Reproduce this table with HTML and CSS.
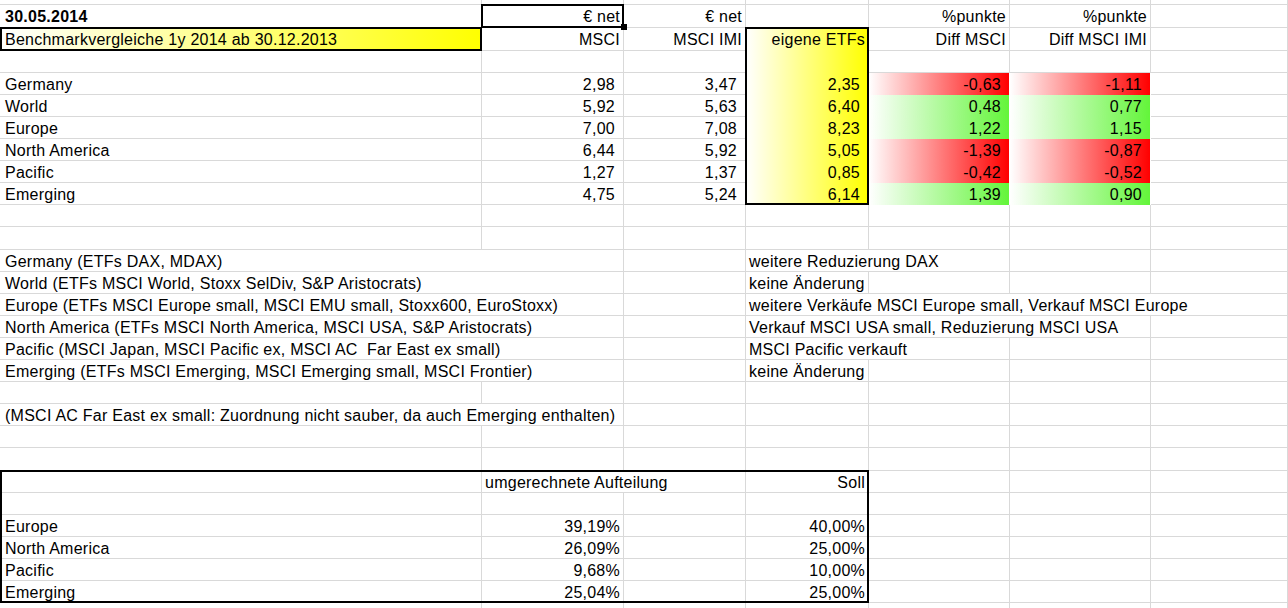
FILE: index.html
```html
<!DOCTYPE html>
<html lang="de">
<head>
<meta charset="utf-8">
<title>Benchmarkvergleiche</title>
<link rel="stylesheet" href="styles.css">
</head>
<body>
<div class="sheet">
  <!-- row 0 (partially scrolled) -->
  <div class="c"></div><div class="c"></div><div class="c"></div><div class="c"></div><div class="c"></div><div class="c"></div><div class="c"></div>

  <!-- row 1 -->
  <div class="c a b">30.05.2014</div>
  <div class="c r kt kl kr kb sel">€ net</div>
  <div class="c r">€ net</div>
  <div class="c"></div>
  <div class="c r">%punkte</div>
  <div class="c r">%punkte</div>
  <div class="c"></div>

  <!-- row 2 -->
  <div class="c a yel kt kl kr kb">Benchmarkvergleiche 1y 2014 ab 30.12.2013</div>
  <div class="c r">MSCI</div>
  <div class="c r">MSCI IMI</div>
  <div class="c r yel kt kl kr">eigene ETFs</div>
  <div class="c r">Diff MSCI</div>
  <div class="c r">Diff MSCI IMI</div>
  <div class="c"></div>

  <!-- row 3 -->
  <div class="c a"></div><div class="c"></div><div class="c"></div>
  <div class="c yel kl kr"></div>
  <div class="c"></div><div class="c"></div><div class="c"></div>

  <!-- row 4 -->
  <div class="c a">Germany</div>
  <div class="c r n">2,98</div>
  <div class="c r n">3,47</div>
  <div class="c r n yel kl kr">2,35</div>
  <div class="c r n red">-0,63</div>
  <div class="c r n red">-1,11</div>
  <div class="c"></div>

  <!-- row 5 -->
  <div class="c a">World</div>
  <div class="c r n">5,92</div>
  <div class="c r n">5,63</div>
  <div class="c r n yel kl kr">6,40</div>
  <div class="c r n grn">0,48</div>
  <div class="c r n grn">0,77</div>
  <div class="c"></div>

  <!-- row 6 -->
  <div class="c a">Europe</div>
  <div class="c r n">7,00</div>
  <div class="c r n">7,08</div>
  <div class="c r n yel kl kr">8,23</div>
  <div class="c r n grn">1,22</div>
  <div class="c r n grn">1,15</div>
  <div class="c"></div>

  <!-- row 7 -->
  <div class="c a">North America</div>
  <div class="c r n">6,44</div>
  <div class="c r n">5,92</div>
  <div class="c r n yel kl kr">5,05</div>
  <div class="c r n red">-1,39</div>
  <div class="c r n red">-0,87</div>
  <div class="c"></div>

  <!-- row 8 -->
  <div class="c a">Pacific</div>
  <div class="c r n">1,27</div>
  <div class="c r n">1,37</div>
  <div class="c r n yel kl kr">0,85</div>
  <div class="c r n red">-0,42</div>
  <div class="c r n red">-0,52</div>
  <div class="c"></div>

  <!-- row 9 -->
  <div class="c a">Emerging</div>
  <div class="c r n">4,75</div>
  <div class="c r n">5,24</div>
  <div class="c r n yel kl kr kb">6,14</div>
  <div class="c r n grn">1,39</div>
  <div class="c r n grn">0,90</div>
  <div class="c"></div>

  <!-- row 10 -->
  <div class="c a"></div><div class="c"></div><div class="c"></div><div class="c"></div><div class="c"></div><div class="c"></div><div class="c"></div>
  <!-- row 11 -->
  <div class="c a"></div><div class="c"></div><div class="c"></div><div class="c"></div><div class="c"></div><div class="c"></div><div class="c"></div>

  <!-- row 12 -->
  <div class="c a s2">Germany (ETFs DAX, MDAX)</div>
  <div class="c"></div>
  <div class="c s2">weitere Reduzierung DAX</div>
  <div class="c"></div>
  <div class="c"></div>

  <!-- row 13 -->
  <div class="c a s2">World (ETFs MSCI World, Stoxx SelDiv, S&amp;P Aristocrats)</div>
  <div class="c"></div>
  <div class="c">keine Änderung</div>
  <div class="c"></div>
  <div class="c"></div>
  <div class="c"></div>

  <!-- row 14 -->
  <div class="c a s2">Europe (ETFs MSCI Europe small, MSCI EMU small, Stoxx600, EuroStoxx)</div>
  <div class="c"></div>
  <div class="c s4">weitere Verkäufe MSCI Europe small, Verkauf MSCI Europe</div>

  <!-- row 15 -->
  <div class="c a s2">North America (ETFs MSCI North America, MSCI USA, S&amp;P Aristocrats)</div>
  <div class="c"></div>
  <div class="c s3">Verkauf MSCI USA small, Reduzierung MSCI USA</div>
  <div class="c"></div>

  <!-- row 16 -->
  <div class="c a s2">Pacific (MSCI Japan, MSCI Pacific ex, MSCI AC&nbsp; Far East ex small)</div>
  <div class="c"></div>
  <div class="c s2">MSCI Pacific verkauft</div>
  <div class="c"></div>
  <div class="c"></div>

  <!-- row 17 -->
  <div class="c a s2">Emerging (ETFs MSCI Emerging, MSCI Emerging small, MSCI Frontier)</div>
  <div class="c"></div>
  <div class="c">keine Änderung</div>
  <div class="c"></div>
  <div class="c"></div>
  <div class="c"></div>

  <!-- row 18 -->
  <div class="c a"></div><div class="c"></div><div class="c"></div><div class="c"></div><div class="c"></div><div class="c"></div><div class="c"></div>

  <!-- row 19 -->
  <div class="c a s2">(MSCI AC Far East ex small: Zuordnung nicht sauber, da auch Emerging enthalten)</div>
  <div class="c"></div><div class="c"></div><div class="c"></div><div class="c"></div><div class="c"></div>

  <!-- row 20 -->
  <div class="c a"></div><div class="c"></div><div class="c"></div><div class="c"></div><div class="c"></div><div class="c"></div><div class="c"></div>
  <!-- row 21 -->
  <div class="c a"></div><div class="c"></div><div class="c"></div><div class="c"></div><div class="c"></div><div class="c"></div><div class="c"></div>

  <!-- row 22 -->
  <div class="c a kt kl"></div>
  <div class="c s2 kt">umgerechnete Aufteilung</div>
  <div class="c r kt kr">Soll</div>
  <div class="c"></div><div class="c"></div><div class="c"></div>

  <!-- row 23 -->
  <div class="c a kl"></div>
  <div class="c"></div>
  <div class="c"></div>
  <div class="c kr"></div>
  <div class="c"></div><div class="c"></div><div class="c"></div>

  <!-- row 24 -->
  <div class="c a kl">Europe</div>
  <div class="c r">39,19%</div>
  <div class="c"></div>
  <div class="c r kr">40,00%</div>
  <div class="c"></div><div class="c"></div><div class="c"></div>

  <!-- row 25 -->
  <div class="c a kl">North America</div>
  <div class="c r">26,09%</div>
  <div class="c"></div>
  <div class="c r kr">25,00%</div>
  <div class="c"></div><div class="c"></div><div class="c"></div>

  <!-- row 26 -->
  <div class="c a kl">Pacific</div>
  <div class="c r">9,68%</div>
  <div class="c"></div>
  <div class="c r kr">10,00%</div>
  <div class="c"></div><div class="c"></div><div class="c"></div>

  <!-- row 27 -->
  <div class="c a kl kb">Emerging</div>
  <div class="c r kb">25,04%</div>
  <div class="c kb"></div>
  <div class="c r kr kb">25,00%</div>
  <div class="c"></div><div class="c"></div><div class="c"></div>

  <!-- row 28 -->
  <div class="c a"></div><div class="c"></div><div class="c"></div><div class="c"></div><div class="c"></div><div class="c"></div><div class="c"></div>
</div>
</body>
</html>
```

FILE: styles.css
```css
html, body {
  margin: 0;
  padding: 0;
  background: #fff;
  overflow: hidden;
}

body {
  width: 1288px;
  height: 608px;
}

.sheet {
  display: grid;
  grid-template-columns: 482px 142px 122px 123px 141px 141px 1fr;
  grid-template-rows: 5px 23px 23px repeat(8, 22px) 23px repeat(9, 22px) 23px repeat(6, 22px) 22px;
  font-family: "Liberation Sans", Arial, sans-serif;
  font-size: 16px;
  letter-spacing: 0.25px;
  color: #000;
}

.c {
  box-sizing: border-box;
  min-width: 0;
  display: flex;
  align-items: center;
  padding: 2px 3px 0;
  white-space: nowrap;
  border-right: 1px solid #d9d9d9;
  border-bottom: 1px solid #d9d9d9;
  line-height: 20px;
}

.a { padding-left: 5px; }
.r { justify-content: flex-end; }
.n { padding-right: 8px; }
.b { font-weight: bold; }

.s2 { grid-column: span 2; }
.s3 { grid-column: span 3; }
.s4 { grid-column: span 4; }

.yel {
  background: linear-gradient(to right, #ffffff, #ffff00);
  border-bottom-color: transparent;
}

.red {
  background: linear-gradient(to right, #ffffff, #ff0000);
  border-bottom-color: transparent;
  border-right-color: #ffffff;
}

.grn {
  background: linear-gradient(to right, #ffffff, #63f53a);
  border-bottom-color: transparent;
  border-right-color: #ffffff;
}

/* thick (medium) cell borders drawn over the grid lines */
.kt, .kl, .kr, .kb { position: relative; }

.kt::after, .kl::after, .kr::after, .kb::after {
  content: "";
  position: absolute;
  top: -1px;
  left: -1px;
  right: -1px;
  bottom: -1px;
  border: 0 solid #000;
  pointer-events: none;
  z-index: 2;
}

.a.kl::after { left: 0; }

.kt::after { border-top-width: 2px; }
.kl::after { border-left-width: 2px; }
.kr::after { border-right-width: 2px; }
.kb::after { border-bottom-width: 2px; }

/* active-cell fill handle */
.sel::before {
  content: "";
  position: absolute;
  right: -4px;
  bottom: -3px;
  width: 6px;
  height: 6px;
  background: #000;
  z-index: 3;
}
```
